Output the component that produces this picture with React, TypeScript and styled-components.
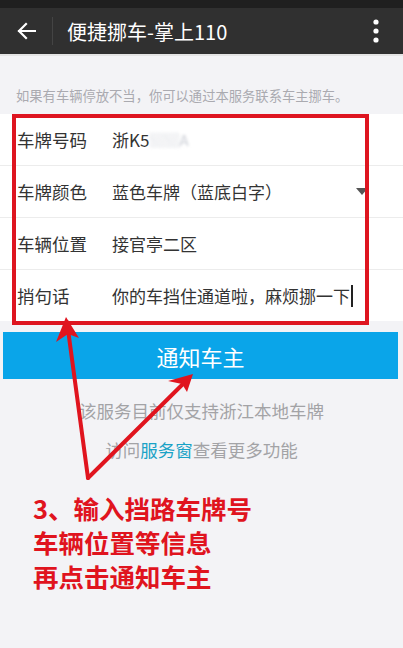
import React from 'react'
import styled, {createGlobalStyle} from 'styled-components'

const GlobalStyle = createGlobalStyle`
  html, body {
    margin: 0;
    padding: 0;
    background: #f3f3f6;
  }
  body {
    font-family: "Noto Sans CJK SC", "Noto Sans", sans-serif;
  }
`

type Field = {
  label: string
  value: string
  select?: boolean
  caret?: boolean
}

const fields: Field[] = [
  {label: '车牌号码', value: '浙K5'},
  {label: '车牌颜色', value: '蓝色车牌（蓝底白字）', select: true},
  {label: '车辆位置', value: '接官亭二区'},
  {label: '捎句话', value: '你的车挡住通道啦，麻烦挪一下', caret: true},
]

const BackIcon = () => (
  <svg width="20" height="18" viewBox="0 0 20 18">
    <path
      d="M19 9H3M10 2L3 9l7 7"
      fill="none"
      stroke="#fff"
      strokeWidth="2.2"
      strokeLinecap="square"
    />
  </svg>
)

const MoreIcon = () => (
  <svg width="6" height="24" viewBox="0 0 6 24">
    <circle cx="3" cy="3" r="2.6" fill="#fff" />
    <circle cx="3" cy="12" r="2.6" fill="#fff" />
    <circle cx="3" cy="21" r="2.6" fill="#fff" />
  </svg>
)

// hand-drawn red pointers from the note up to the form and the button
const Pointers = () => (
  <Overlay width="403" height="648" viewBox="0 0 403 648">
    <g stroke="#e0141e" strokeWidth="4" strokeLinecap="round" fill="none">
      <path d="M88 478L67 322" />
      <path d="M88 478L189 378" />
    </g>
    <g fill="#e0141e">
      <path d="M66 317L56 342L68 334L79 338Z" />
      <path d="M193 374L168 381L182 384L187 392Z" />
    </g>
  </Overlay>
)

const App: React.FC = () => {
  return (
    <Page>
      <GlobalStyle />
      <StatusStrip />
      <TopBar>
        <BackButton>
          <BackIcon />
        </BackButton>
        <Divider />
        <Title>便捷挪车-掌上110</Title>
        <MoreButton>
          <MoreIcon />
        </MoreButton>
      </TopBar>

      <Hint>如果有车辆停放不当，你可以通过本服务联系车主挪车。</Hint>

      <FormCard>
        <Highlight />
        {fields.map((f) => (
          <Row key={f.label}>
            <Label>{f.label}</Label>
            <Value>
              {f.value}
              {f.label === '车牌号码' && <Masked>▒▒A</Masked>}
              {f.caret && <Caret />}
            </Value>
            {f.select && <SelectArrow />}
          </Row>
        ))}
      </FormCard>

      <NotifyButton>通知车主</NotifyButton>

      <Notes>
        <Note>该服务目前仅支持浙江本地车牌</Note>
        <Note>
          访问<NoteLink>服务窗</NoteLink>查看更多功能
        </Note>
      </Notes>

      <Callout>
        <div>3、输入挡路车牌号</div>
        <div>车辆位置等信息</div>
        <div>再点击通知车主</div>
      </Callout>

      <Pointers />
    </Page>
  )
}
export default App

const Page = styled.div`
  position: relative;
  width: 403px;
  height: 648px;
  overflow: hidden;
  background: #f3f3f6;
`

const Overlay = styled.svg`
  position: absolute;
  left: 0;
  top: 0;
  pointer-events: none;
`

const StatusStrip = styled.div`
  height: 8px;
  background: #1f1f1f;
`

const TopBar = styled.div`
  height: 46px;
  background: #303030;
  border-bottom: 2px solid #e4e4e4;
  display: flex;
  align-items: center;
  padding: 0 0 0 16px;
`

const BackButton = styled.div`
  width: 20px;
  height: 18px;
  display: flex;
`

const Divider = styled.div`
  width: 1px;
  height: 28px;
  background: #444;
  margin-left: 16px;
`

const Title = styled.div`
  margin-left: 14px;
  color: #fff;
  font-size: 20px;
  flex: 1;
`

const MoreButton = styled.div`
  width: 6px;
  height: 24px;
  display: flex;
  margin-right: 24px;
`

const Hint = styled.div`
  padding: 30px 0 0 16px;
  height: 26px;
  font-size: 13.3px;
  color: #aaaab0;
  white-space: nowrap;
`

const FormCard = styled.div`
  position: relative;
  margin-top: 2px;
  background: #fff;
  display: flex;
  flex-direction: column;
`

const Highlight = styled.div`
  position: absolute;
  left: 12px;
  top: 0;
  width: 349px;
  height: 203px;
  border: 4px solid #de1520;
`

const Row = styled.div`
  display: flex;
  align-items: center;
  height: 51px;
  padding: 0 0 0 17px;
  border-bottom: 1px solid #ececec;
  &:last-child {
    border-bottom: none;
  }
`

const Label = styled.div`
  width: 95px;
  font-size: 17.5px;
  color: #333;
`

const Value = styled.div`
  flex: 1;
  font-size: 17px;
  color: #333;
  display: flex;
  align-items: center;
`

const Masked = styled.span`
  color: #c9ccd4;
  filter: blur(1.5px);
  font-size: 15px;
`

const Caret = styled.span`
  width: 2px;
  height: 22px;
  margin-left: 1px;
  background: #222;
`

const SelectArrow = styled.div`
  width: 0;
  height: 0;
  border-left: 6px solid transparent;
  border-right: 6px solid transparent;
  border-top: 7px solid #555;
  margin-right: 35px;
`

const NotifyButton = styled.div`
  margin: 11px 5px 0 3px;
  height: 47px;
  background: #0aa5e9;
  color: #fff;
  font-size: 22px;
  display: flex;
  align-items: center;
  justify-content: center;
`

const Notes = styled.div`
  display: flex;
  flex-direction: column;
  gap: 14px;
  padding-top: 19px;
`

const Note = styled.div`
  text-align: center;
  font-size: 17.5px;
  color: #a3a3a6;
  line-height: 25px;
`

const NoteLink = styled.span`
  color: #1aa2c6;
`

const Callout = styled.div`
  margin: 29px 0 0 33px;
  color: #e0141e;
  font-size: 25.5px;
  font-weight: 700;
  line-height: 34px;
`
